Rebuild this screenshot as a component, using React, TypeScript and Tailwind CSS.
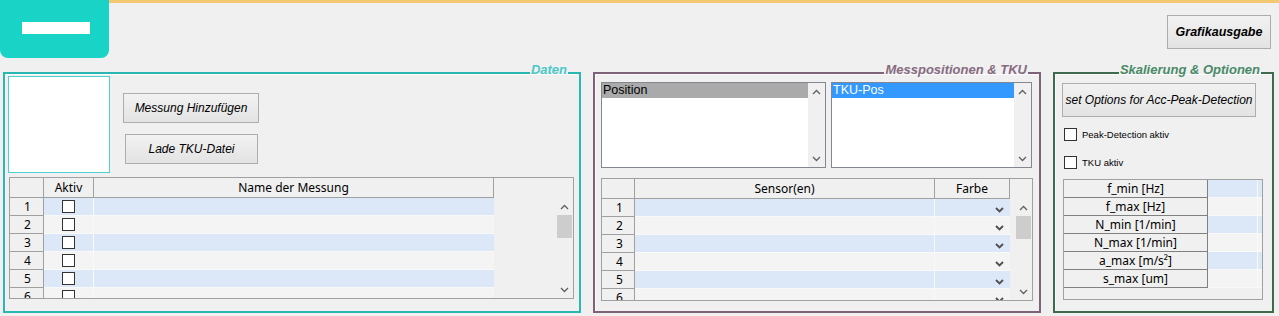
import type { ReactNode } from "react";

const ROWS = [1, 2, 3, 4, 5, 6];
const PARAMS = ["f_min [Hz]", "f_max [Hz]", "N_min [1/min]", "N_max [1/min]", "a_max [m/s²]", "s_max [um]"];

const rowBg = (i: number) => (i % 2 === 0 ? "bg-[#dce8f8]" : "bg-[#f4f4f4]");

function Chevron({ up = false, bold = false }: { up?: boolean; bold?: boolean }) {
  return (
    <svg width="9" height="6" viewBox="0 0 9 6" className="block">
      <polyline
        points={up ? "1,5 4.5,1.5 8,5" : "1,1 4.5,4.5 8,1"}
        fill="none"
        stroke={bold ? "#505050" : "#606060"}
        strokeWidth={bold ? 1.9 : 1.3}
      />
    </svg>
  );
}

function ScrollBar({ thumb = false }: { thumb?: boolean }) {
  return (
    <div className="flex w-[17px] flex-1 flex-col items-center bg-[#f0f0f0]">
      <div className="flex h-[17px] w-full items-center justify-center">
        <Chevron up />
      </div>
      {thumb && <div className="h-[23px] w-[15px] bg-[#cdcdcd]" />}
      <div className="flex-1" />
      <div className="flex h-[17px] w-full items-center justify-center">
        <Chevron />
      </div>
    </div>
  );
}

function Check() {
  return <span className="block h-[13px] w-[13px] shrink-0 border border-[#333333] bg-white" />;
}

function WinButton({ className, children }: { className: string; children: ReactNode }) {
  return (
    <button
      className={`flex items-center justify-center border border-[#adadad] bg-linear-to-b from-[#f2f2f2] to-[#e3e3e3] italic text-black ${className}`}
    >
      {children}
    </button>
  );
}

function GroupBox({
  title,
  className,
  legendClass,
  children,
}: {
  title: string;
  className: string;
  legendClass: string;
  children: ReactNode;
}) {
  return (
    <fieldset className={`h-[243px] border-2 shadow-[inset_1px_1px_0_#fbfbfb] ${className}`}>
      <legend className={`ml-auto mr-[11px] h-[6px] px-[1px] text-[13px] font-bold italic leading-[0px] ${legendClass}`}>
        {title}
      </legend>
      {children}
    </fieldset>
  );
}

function ListBox({ width, item, selClass }: { width: string; item: string; selClass: string }) {
  return (
    <div className={`flex h-[86px] border border-[#828790] bg-white ${width}`}>
      <div className="flex-1">
        <div className={`h-[15px] pl-[1px] text-[12.5px] leading-[15px] ${selClass}`}>{item}</div>
      </div>
      <div className="flex flex-col">
        <ScrollBar />
      </div>
    </div>
  );
}

function RowHead({ n, w }: { n?: number; w: string }) {
  return (
    <div className={`h-full border-r border-b border-[#a0a0a0] pl-[14px] leading-[17px] ${w}`}>{n}</div>
  );
}

function DatenTable() {
  return (
    <div className="ml-[1px] mt-[4px] flex h-[122px] w-[565px] overflow-hidden border border-[#a0a0a0] bg-[#f0f0f0] font-['Noto_Sans',sans-serif] text-[12px] text-black">
      <div className="w-[484px]">
        <div className="flex h-[20px]">
          <RowHead w="w-[34px]" />
          <div className="w-[50px] border-r border-b border-[#a0a0a0] text-center leading-[19px]">Aktiv</div>
          <div className="w-[400px] border-r border-b border-[#a0a0a0] text-center leading-[19px]">Name der Messung</div>
        </div>
        {ROWS.map((n, i) => (
          <div key={n} className="flex h-[18px]">
            <RowHead n={n} w="w-[34px]" />
            <div className={`flex w-[50px] items-center justify-center border-r border-b border-[#f9f9f9] ${rowBg(i)}`}>
              <Check />
            </div>
            <div className={`w-[400px] border-b border-[#f9f9f9] ${rowBg(i)}`} />
          </div>
        ))}
      </div>
      <div className="flex-1" />
      <div className="flex flex-col">
        <div className="h-[20px]" />
        <ScrollBar thumb />
      </div>
    </div>
  );
}

function SensorTable() {
  return (
    <div className="mt-[10px] flex h-[123px] w-[432px] overflow-hidden border border-[#a0a0a0] bg-[#f0f0f0] font-['Noto_Sans',sans-serif] text-[12px] text-black">
      <div className="w-[408px]">
        <div className="flex h-[20px]">
          <RowHead w="w-[33px]" />
          <div className="w-[300px] border-r border-b border-[#a0a0a0] text-center leading-[19px]">Sensor(en)</div>
          <div className="w-[75px] border-r border-b border-[#a0a0a0] text-center leading-[19px]">Farbe</div>
        </div>
        {ROWS.map((n, i) => (
          <div key={n} className="flex h-[18px]">
            <RowHead n={n} w="w-[33px]" />
            <div className={`w-[300px] border-r border-b border-[#f9f9f9] ${rowBg(i)}`} />
            <div className={`flex w-[75px] items-center justify-end border-b border-[#f9f9f9] pr-[6px] pt-[4px] ${rowBg(i)}`}>
              <Chevron bold />
            </div>
          </div>
        ))}
      </div>
      <div className="flex-1" />
      <div className="flex flex-col">
        <div className="h-[20px]" />
        <ScrollBar thumb />
      </div>
    </div>
  );
}

function ParamTable() {
  return (
    <div className="ml-[1px] mt-[10px] h-[121px] w-[200px] overflow-hidden border border-[#a0a0a0] bg-[#f0f0f0] font-['Noto_Sans',sans-serif] text-[12px] text-black">
      {PARAMS.map((p, i) => (
        <div key={p} className="flex h-[18px]">
          <div className="w-[144px] border-r border-b border-[#808080] text-center leading-[17px]">{p}</div>
          <div className={`w-[49px] border-b border-[#f9f9f9] ${rowBg(i)}`} />
          <div className={`w-[5px] border-l border-b border-[#f9f9f9] ${rowBg(i)}`} />
        </div>
      ))}
    </div>
  );
}

export default function App() {
  return (
    <div className="h-[316px] w-[1279px] overflow-hidden bg-[#f0f0f0] font-['Liberation_Sans',Arial,sans-serif]">
      <div className="flex h-[70px]">
        <div className="h-[58px] w-[109px] rounded-b-[8px] bg-[#18d3c6] pl-[22px] pt-[22px]">
          <div className="h-[12px] w-[68px] bg-white" />
        </div>
        <div className="flex flex-1 items-start justify-end border-t-[3px] border-[#f2c873] pr-[8px] pt-[12px]">
          <WinButton className="h-[34px] w-[104px] text-[12.5px] font-bold">Grafikausgabe</WinButton>
        </div>
      </div>

      <div className="flex gap-[12px] pl-[3px]">
        <GroupBox title="Daten" className="w-[578px] border-[#2ab6b1]" legendClass="text-[#4cc8c8]">
          <div className="pl-[3px]">
            <div className="flex">
              <div className="h-[97px] w-[102px] border border-[#4fd1d1] bg-white" />
              <div className="ml-[13px] flex flex-col">
                <WinButton className="mt-[17px] h-[30px] w-[136px] text-[12px]">Messung Hinzufügen</WinButton>
                <WinButton className="ml-[2px] mt-[11px] h-[30px] w-[133px] text-[12px]">Lade TKU-Datei</WinButton>
              </div>
            </div>
            <DatenTable />
          </div>
        </GroupBox>

        <GroupBox title="Messpositionen & TKU" className="w-[448px] border-[#7e6277]" legendClass="text-[#876b81]">
          <div className="pl-[6px] pt-[6px]">
            <div className="flex gap-[5px]">
              <ListBox width="w-[225px]" item="Position" selClass="bg-[#aaaaaa] text-black" />
              <ListBox width="w-[201px]" item="TKU-Pos" selClass="bg-[#3399ff] text-white" />
            </div>
            <SensorTable />
          </div>
        </GroupBox>

        <GroupBox title="Skalierung & Optionen" className="w-[221px] border-[#3e6a4e]" legendClass="text-[#4a8a68]">
          <div className="pl-[7px] pt-[7px]">
            <WinButton className="h-[34px] w-[194px] text-[12px]">set Options for Acc-Peak-Detection</WinButton>
            <label className="ml-[2px] mt-[11px] flex h-[13px] items-center gap-[5px] text-[9.5px] leading-[13px] text-black">
              <Check />
              Peak-Detection aktiv
            </label>
            <label className="ml-[2px] mt-[15px] flex h-[13px] items-center gap-[5px] text-[9.5px] leading-[13px] text-black">
              <Check />
              TKU aktiv
            </label>
            <ParamTable />
          </div>
        </GroupBox>
      </div>
    </div>
  );
}
